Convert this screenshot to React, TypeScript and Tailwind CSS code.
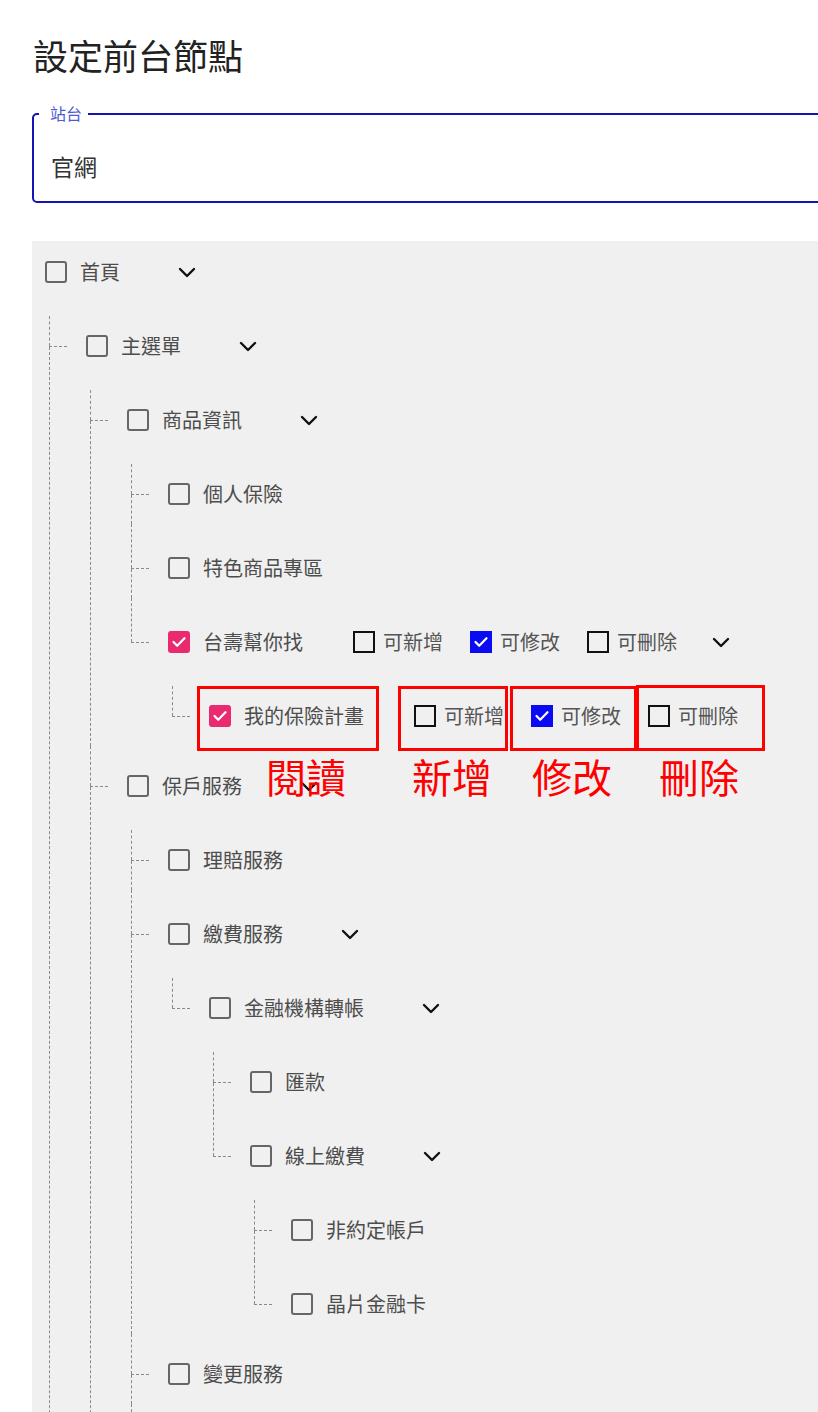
import React from "react";

type TNode = {
  label: string;
  checked?: boolean;
  perms?: [boolean, boolean, boolean];
  chevron?: boolean;
  annotated?: boolean;
  spacer?: boolean;
  children?: TNode[];
};

const tree: TNode = {
  label: "首頁",
  chevron: true,
  children: [
    {
      label: "主選單",
      chevron: true,
      children: [
        {
          label: "商品資訊",
          chevron: true,
          children: [
            { label: "個人保險" },
            { label: "特色商品專區" },
            {
              label: "台壽幫你找",
              checked: true,
              perms: [false, true, false],
              chevron: true,
              children: [
                {
                  label: "我的保險計畫",
                  checked: true,
                  perms: [false, true, false],
                  annotated: true,
                },
              ],
            },
          ],
        },
        {
          label: "保戶服務",
          chevron: true,
          children: [
            { label: "理賠服務" },
            {
              label: "繳費服務",
              chevron: true,
              children: [
                {
                  label: "金融機構轉帳",
                  chevron: true,
                  children: [
                    { label: "匯款" },
                    {
                      label: "線上繳費",
                      chevron: true,
                      children: [{ label: "非約定帳戶" }, { label: "晶片金融卡" }],
                    },
                  ],
                },
              ],
            },
            { label: "變更服務" },
            { label: "more-a", spacer: true },
          ],
        },
        { label: "more-b", spacer: true },
      ],
    },
    { label: "more-c", spacer: true },
  ],
};

const Check = () => (
  <svg width="22" height="22" viewBox="0 0 22 22" className="block">
    <polyline
      points="5.5,11 9.2,14.8 16.5,7.2"
      fill="none"
      stroke="#ffffff"
      strokeWidth="2.2"
      strokeLinecap="round"
      strokeLinejoin="round"
    />
  </svg>
);

const TreeBox = ({ checked }: { checked?: boolean }) =>
  checked ? (
    <div className="w-[22px] h-[22px] shrink-0 rounded-[3px] bg-[#ea2a6f] flex items-center justify-center">
      <Check />
    </div>
  ) : (
    <div className="w-[22px] h-[22px] shrink-0 rounded-[3px] border-2 border-[#666666]" />
  );

const PermBox = ({ checked }: { checked?: boolean }) =>
  checked ? (
    <div className="w-[22px] h-[22px] shrink-0 bg-[#0a0af5] flex items-center justify-center">
      <Check />
    </div>
  ) : (
    <div className="w-[22px] h-[22px] shrink-0 border-2 border-[#111111]" />
  );

const Chevron = ({ className }: { className: string }) => (
  <svg width="18" height="11" viewBox="0 0 18 11" className={className}>
    <path d="M2 2 L9 9 L16 2" fill="none" stroke="#111111" strokeWidth="2.4" strokeLinecap="round" strokeLinejoin="round" />
  </svg>
);

const permLabels = ["可新增", "可修改", "可刪除"];

function Row({ node }: { node: TNode }) {
  if (node.spacer) return <div className="h-[60px]" />;
  return (
    <div className={`${node.annotated ? "relative" : ""} flex h-[60px] items-center`}>
      <TreeBox checked={node.checked} />
      <span className="ml-[13px] text-[20px] leading-none text-[#4d4d4d] whitespace-nowrap">{node.label}</span>
      {node.perms && (
        <div className="ml-[50px] flex items-center gap-[27px]">
          {node.perms.map((p, i) => (
            <div key={i} className="flex items-center">
              <PermBox checked={p} />
              <span className="ml-[8px] text-[20px] leading-none text-[#555555] whitespace-nowrap">{permLabels[i]}</span>
            </div>
          ))}
        </div>
      )}
      {node.chevron && <Chevron className={`block shrink-0 ${node.perms ? "ml-[35px]" : "ml-[58px]"}`} />}
      {node.annotated && (
        <>
          <div className="absolute left-[-12px] top-0 w-[182px] h-[65px] border-[3px] border-[#ff0000]" />
          <div className="absolute left-[189px] top-0 w-[110px] h-[65px] border-[3px] border-[#ff0000]" />
          <div className="absolute left-[301px] top-0 w-[127px] h-[65px] border-[3px] border-[#ff0000]" />
          <div className="absolute left-[427px] top-[-1px] w-[129px] h-[66px] border-[3px] border-[#ff0000]" />
          <span className="absolute left-[57px] top-[70px] text-[40px] leading-[40px] text-[#ff0000] whitespace-nowrap">閱讀</span>
          <span className="absolute left-[203px] top-[70px] text-[40px] leading-[40px] text-[#ff0000] whitespace-nowrap">新增</span>
          <span className="absolute left-[323px] top-[70px] text-[40px] leading-[40px] text-[#ff0000] whitespace-nowrap">修改</span>
          <span className="absolute left-[450px] top-[70px] text-[40px] leading-[40px] text-[#ff0000] whitespace-nowrap">刪除</span>
        </>
      )}
    </div>
  );
}

const topSeg: Record<number, string> = { 0: "h-[30px]", 14: "h-[44px]", 10: "h-[40px]" };
const padTop: Record<number, string> = { 0: "pt-0", 14: "pt-[14px]", 10: "pt-[10px]" };

function ChildList({ items }: { items: TNode[] }) {
  return (
    <div className="ml-[4px] mt-[14px] flex flex-col">
      {items.map((child, i) => {
        const isLast = i === items.length - 1;
        const prevExpanded = i > 0 && !!items[i - 1].children?.length;
        const gap = i === 0 ? 0 : prevExpanded ? 10 : 14;
        return (
          <div key={child.label} className="flex">
            <div className="w-[37px] shrink-0 flex flex-col">
              <div className={`${topSeg[gap]} border-l border-dashed border-[#8a8a8a]`} />
              <div className="w-[18px] h-0 border-t border-dashed border-[#8a8a8a]" />
              {!isLast && <div className="flex-1 border-l border-dashed border-[#8a8a8a]" />}
            </div>
            <div className={`flex-1 min-w-0 ${padTop[gap]}`}>
              <NodeView node={child} />
            </div>
          </div>
        );
      })}
    </div>
  );
}

function NodeView({ node }: { node: TNode }) {
  return (
    <div className="flex flex-col">
      <Row node={node} />
      {node.children && node.children.length > 0 && <ChildList items={node.children} />}
    </div>
  );
}

export default function App() {
  return (
    <div className="w-full h-[1412px] overflow-hidden bg-white font-['Noto_Sans_CJK_TC','Noto_Sans',sans-serif]">
      <div className="w-[900px] pl-[32px]">
        <h1 className="pt-[31px] pl-[1px] text-[35px] leading-[48px] font-normal text-[#222222]">設定前台節點</h1>
        <div className="relative mt-[34px] h-[90px] border-2 border-[#1414b4] rounded-[5px] pl-[17px] pt-[16px] flex items-center">
          <span className="absolute left-[5px] top-[-11px] bg-white pl-[11px] pr-[6px] text-[16px] leading-[18px] text-[#4c5bd4]">
            站台
          </span>
          <span className="text-[23px] leading-none text-[#333333]">官網</span>
        </div>
        <div className="mt-[38px] bg-[#f0f0f0] pl-[13px] pt-[1px] min-h-[1200px]">
          <NodeView node={tree} />
        </div>
      </div>
    </div>
  );
}
